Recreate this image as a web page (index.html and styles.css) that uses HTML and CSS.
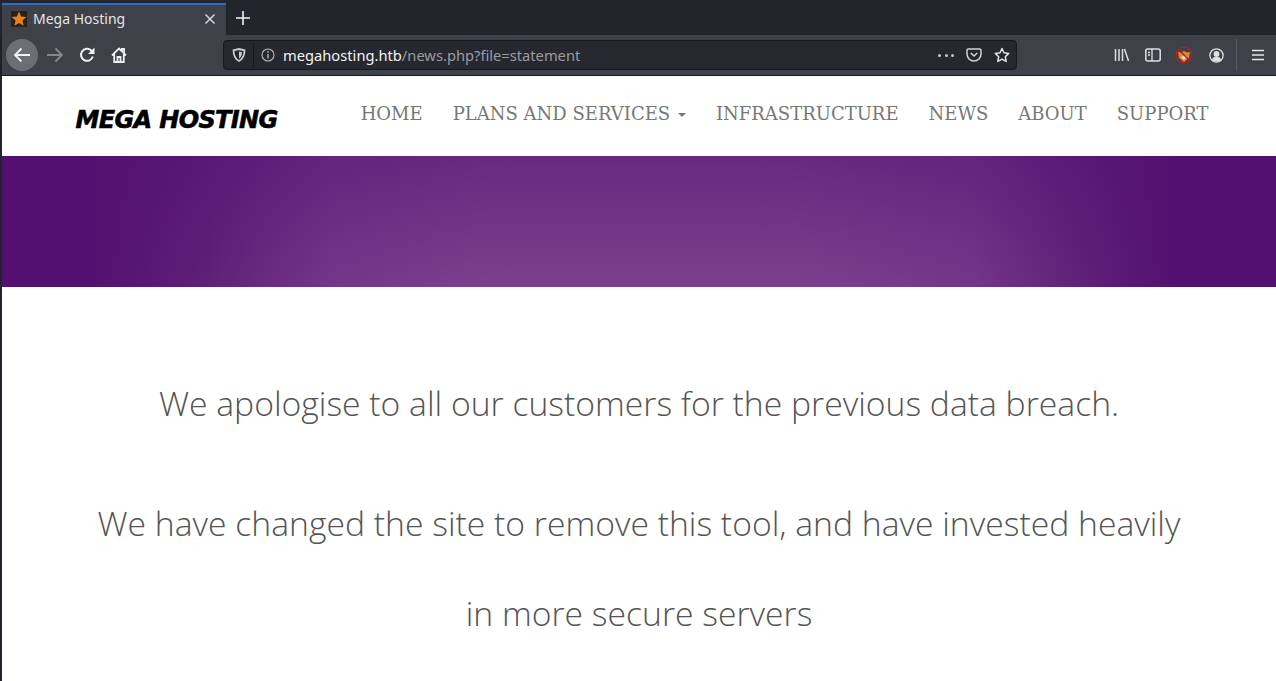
FILE: index.html
```html
<!DOCTYPE html>
<html lang="en">
<head>
<meta charset="utf-8">
<title>Mega Hosting</title>
<link rel="stylesheet" href="styles.css">
</head>
<body>
<div class="browser">
  <div class="tabstrip">
    <div class="tab">
      <svg class="favicon" width="16" height="16" viewBox="0 0 16 16"><rect width="16" height="16" fill="#2a2118"/><path d="M8 .5l2.100 5 5.400.4-4.100 3.500 1.300 5.300L8 11.900l-4.700 2.800 1.300-5.300L.5 5.900l5.400-.4z" fill="#e8811a"/></svg>
      <span class="tab-title">Mega Hosting</span>
      <svg class="tab-close" width="12" height="12" viewBox="0 0 12 12"><path d="M1.500 1.500l9 9M10.500 1.500l-9 9" stroke="#d6d7da" stroke-width="1.500"/></svg>
    </div>
    <svg class="newtab" width="14" height="14" viewBox="0 0 14 14"><path d="M7 0v14M0 7h14" stroke="#f2f2f3" stroke-width="1.600"/></svg>
  </div>
  <div class="toolbar">
    <div class="back">
      <svg width="18" height="16" viewBox="0 0 18 16"><path d="M17 8H2M8.500 1.500L2 8l6.500 6.500" fill="none" stroke="#f4f4f5" stroke-width="1.800"/></svg>
    </div>
    <svg class="forward" width="18" height="16" viewBox="0 0 18 16"><path d="M1 8h15M9.500 1.500L16 8l-6.500 6.500" fill="none" stroke="#85868a" stroke-width="1.800"/></svg>
    <svg class="reload" width="16" height="16" viewBox="0 0 16 16"><path d="M13.800 9.500A6 6 0 1 1 12.200 3.500L14.500 5.800" fill="none" stroke="#f0f0f1" stroke-width="2"/><path d="M15.500 .5v6.500H9z" fill="#f0f0f1"/></svg>
    <svg class="home" width="16" height="16" viewBox="0 0 16 16"><path d="M1 8.300l7-6.800 3 2.900V2h2v4.300l2 2M3.200 6.800V15h9.600V6.800M6.500 15v-5h3v5" fill="none" stroke="#f0f0f1" stroke-width="1.800"/></svg>
    <div class="urlbar">
      <svg class="shield" width="14" height="14" viewBox="0 0 14 14"><path d="M7 1l5.500 1.300c0 5.500-1.500 8.700-5.500 10.700C3 11 1.500 7.800 1.500 2.300z" fill="none" stroke="#c9cacc" stroke-width="1.800"/><path d="M7 3.500l3 .7C10 7 9 9.500 7 10.500z" fill="#c9cacc"/></svg>
      <span class="url-sep"></span>
      <svg class="info" width="14" height="14" viewBox="0 0 14 14"><circle cx="7" cy="7" r="6" fill="none" stroke="#b9babd" stroke-width="1.100"/><path d="M7 6v4.500" stroke="#b9babd" stroke-width="1.400"/><circle cx="7" cy="3.900" r=".9" fill="#b9babd"/></svg>
      <span class="url"><span class="url-host">megahosting.htb</span>/news.php?file=statement</span>
      <span class="url-dots"><i></i><i></i><i></i></span>
      <svg class="pocket" width="16" height="14" viewBox="0 0 16 14"><path d="M1 2.500C1 1.500 1.700 1 2.500 1h11c.8 0 1.500.5 1.500 1.500V6a7 7 0 0 1-14 0z" fill="none" stroke="#d3d4d6" stroke-width="1.500"/><path d="M4.800 5L8 8l3.200-3" fill="none" stroke="#d3d4d6" stroke-width="1.600"/></svg>
      <svg class="star" width="16" height="16" viewBox="0 0 16 16"><path d="M8 1.500l2 4.300 4.700.6-3.400 3.300.9 4.700L8 12.100l-4.200 2.300.9-4.700L1.300 6.400 6 5.800z" fill="none" stroke="#e2e3e4" stroke-width="1.500" stroke-linejoin="round"/></svg>
    </div>
    <div class="toolbar-right">
      <svg class="library" width="16" height="14" viewBox="0 0 16 14"><path d="M1.500 1v12M5 1v12M8.500 1v12M10.500 1l4 12" stroke="#e0e0e2" stroke-width="1.500" fill="none"/></svg>
      <svg class="sidebar" width="16" height="14" viewBox="0 0 16 14"><rect x=".8" y="1" width="14.400" height="12" rx="2" fill="none" stroke="#e0e0e2" stroke-width="1.500"/><path d="M7 1v12M3 4.500h2M3 7h2" stroke="#e0e0e2" stroke-width="1.300"/></svg>
      <svg class="ext" width="18" height="18" viewBox="0 0 18 18"><circle cx="9" cy="9" r="7.800" fill="#3f4148" stroke="#a8242e" stroke-width="1.300"/><path d="M3 6l3 .5L9 5l3 1.500L15 6l-1 6-5 4-5-4z" fill="#e8842c"/><path d="M6 11l3 3 3-3-3-1.500z" fill="#f4dfc0"/><path d="M3.500 3.500l11 11" stroke="#a8242e" stroke-width="1.400"/></svg>
      <svg class="account" width="15" height="15" viewBox="0 0 15 15"><circle cx="7.500" cy="7.500" r="6.600" fill="none" stroke="#e0e0e2" stroke-width="1.300"/><circle cx="7.500" cy="6" r="2.900" fill="#e0e0e2"/><path d="M2.800 11.500c1-2 2.700-2.700 4.700-2.700s3.700.7 4.700 2.700a6.500 6.500 0 0 1-9.400 0z" fill="#e0e0e2"/></svg>
      <span class="toolbar-sep"></span>
      <svg class="menu" width="12" height="12" viewBox="0 0 12 12"><path d="M0 1.500h12M0 6h12M0 10.500h12" stroke="#e8e8ea" stroke-width="1.500"/></svg>
    </div>
  </div>
</div>
<div class="page">
  <header class="site-header">
    <div class="logo">MEGA HOSTING</div>
    <nav class="nav">
      <a>HOME</a>
      <a>PLANS AND SERVICES <span class="caret"></span></a>
      <a>INFRASTRUCTURE</a>
      <a>NEWS</a>
      <a>ABOUT</a>
      <a>SUPPORT</a>
    </nav>
  </header>
  <div class="banner"></div>
  <main class="statement">
    <p class="line-first">We apologise to all our customers for the previous data breach.</p>
    <p class="line-second">We have changed the site to remove this tool, and have invested heavily</p>
    <p class="line-third">in more secure servers</p>
  </main>
</div>
</body>
</html>
```
FILE: styles.css
```css
html, body {
  margin: 0;
  padding: 0;
  height: 681px;
  overflow: hidden;
  background: #fff;
}
.browser {
  height: 76px;
  background: #1f2128;
  font-family: "Noto Sans", sans-serif;
  box-sizing: border-box;
}
.tabstrip {
  height: 35px;
  display: flex;
  align-items: flex-start;
  background: #23252d;
  padding-left: 2px;
}
.tab {
  width: 224px;
  height: 32px;
  margin-top: 3px;
  box-sizing: border-box;
  border-top: 2px solid #2a6bc9;
  background: #3f4148;
  display: flex;
  align-items: center;
  padding: 0 10px 2px 9px;
  color: #e4e4e6;
  font-size: 14px;
}
.favicon { flex: none; }
.tab-title { margin-left: 6px; flex: 1; margin-bottom: 2px; }
.tab-close { flex: none; }
.newtab { margin: 11px 0 0 10px; }
.toolbar {
  height: 40px;
  background: #3f4148;
  margin-left: 2px;
  display: flex;
  align-items: center;
  border-bottom: 1px solid #17181c;
  box-sizing: content-box;
}
.back {
  width: 32px;
  height: 32px;
  margin-left: 4px;
  border-radius: 50%;
  background: #6d6e73;
  display: flex;
  align-items: center;
  justify-content: center;
  flex: none;
}
.forward { margin-left: 8px; flex: none; }
.reload { margin-left: 15px; flex: none; }
.home { margin-left: 16px; flex: none; }
.urlbar {
  width: 794px;
  height: 30px;
  margin-left: 96px;
  box-sizing: border-box;
  flex: none;
  background: #26272f;
  border: 1px solid #17181c;
  border-radius: 4px;
  display: flex;
  align-items: center;
  padding-left: 8px;
  padding-right: 6px;
  color: #9b9ca0;
  font-size: 14.700px;
}
.shield { flex: none; }
.url-sep { width: 1px; height: 24px; background: #17181c; margin: 0 7px 0 7px; flex: none; }
.info { flex: none; }
.url { margin-left: 8px; flex: 1; white-space: nowrap; }
.url-host { color: #f2f2f3; }
.url-dots { display: flex; gap: 3.500px; margin-right: 12px; }
.url-dots i { width: 3px; height: 3px; border-radius: 50%; background: #c8c9cb; }
.pocket { margin-right: 12px; flex: none; }
.star { flex: none; }
.toolbar-right {
  display: flex;
  align-items: center;
  margin-left: 97px;
}
.sidebar { margin-left: 15px; }
.ext { margin-left: 14px; }
.account { margin-left: 16px; }
.toolbar-sep { width: 1px; height: 32px; background: #5a5b61; margin-left: 12px; }
.menu { margin-left: 15px; }
.page {
  height: 605px;
  border-left: 2px solid #23252d;
  overflow: hidden;
  color: #666;
}
.site-header {
  height: 80px;
  display: flex;
  align-items: center;
  justify-content: space-between;
  padding: 0 67.500px 0 73.500px;
}
.logo {
  font-family: "DejaVu Sans", sans-serif;
  font-weight: 700;
  font-style: italic;
  font-size: 24px;
  color: #000;
  margin-top: 8px;
  letter-spacing: -0.640px;
  -webkit-text-stroke: 0.600px #000;
}
.nav {
  display: flex;
  gap: 30px;
  font-family: "DejaVu Serif", serif;
  font-size: 18px;
  color: #777;
  margin-top: -6px;
}
.caret {
  display: inline-block;
  width: 0;
  height: 0;
  margin-left: 2px;
  vertical-align: middle;
  border-top: 4px solid #777;
  border-left: 4px solid transparent;
  border-right: 4px solid transparent;
}
.banner {
  height: 131px;
  background:
    linear-gradient(180deg, rgba(84, 16, 112, 0.5) 0%, rgba(84, 16, 112, 0) 100%),
    linear-gradient(90deg, #541070 7%, #5f2078 16%, #74368a 26%, #7c408e 38%, #7c408e 62%, #74368a 76%, #5f2078 85%, #541070 92%);
}
.statement {
  font-family: "Open Sans", sans-serif;
  font-weight: 300;
  font-size: 33.700px;
  text-align: center;
  color: #555;
  padding: 92px 0 0;
}
.statement p { margin: 0; line-height: 48px; }
.line-second { margin-top: 72px !important; }
.line-third { margin-top: 42px !important; }
```
